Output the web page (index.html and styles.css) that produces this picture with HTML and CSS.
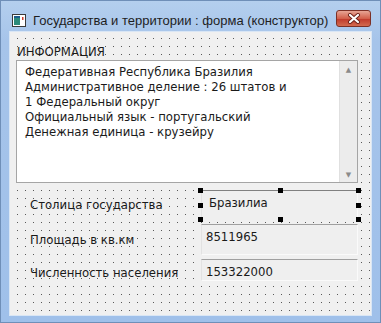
FILE: index.html
```html
<!DOCTYPE html>
<html lang="ru">
  <head>
    <meta charset="UTF-8" />
    <title>Государства и территории : форма (конструктор)</title>
    <link rel="stylesheet" href="styles.css">
  </head>
  <body>
    <div class="window">
      <div class="titlebar">
        <svg class="app_icon" width="14" height="13" viewBox="0 0 14 13">
          <rect x="0.5" y="0.5" width="13" height="12" fill="#fff" stroke="#3a3a3a" />
          <rect x="2" y="2" width="6" height="9" fill="#2c8a7a" />
          <rect x="2" y="2" width="6" height="2" fill="#1b5e8c" />
          <rect x="10" y="3" width="1.5" height="3" fill="#d04030" />
        </svg>
        <div class="title">Государства и территории : форма (конструктор)</div>
        <div class="close_btn">
          <svg width="14" height="11" viewBox="0 0 14 11">
            <path d="M3 2 L11 9 M11 2 L3 9" stroke="#6b2018" stroke-width="4" stroke-linecap="round" />
            <path d="M3 2 L11 9 M11 2 L3 9" stroke="#fff" stroke-width="2.2" stroke-linecap="round" />
          </svg>
        </div>
      </div>
      <div class="client">
        <div class="section_label">ИНФОРМАЦИЯ</div>
        <div class="memo">
          <div class="memo_text">
            Федеративная Республика Бразилия<br>
            Административное деление : 26 штатов и<br>
            1 Федеральный округ<br>
            Официальный язык - португальский<br>
            Денежная единица - крузейру
          </div>
          <div class="scrollbar">
            <span class="arrow">&#9650;</span>
            <span class="arrow">&#9660;</span>
          </div>
        </div>
        <div class="fields">
          <div class="field_row row1">
            <div class="field_label">Столица государства</div>
            <div class="field_box selected">
              Бразилиа
              <span class="handle h_tl"></span>
              <span class="handle h_tm"></span>
              <span class="handle h_tr"></span>
              <span class="handle h_ml"></span>
              <span class="handle h_mr"></span>
              <span class="handle h_bl"></span>
              <span class="handle h_bm"></span>
              <span class="handle h_br"></span>
            </div>
          </div>
          <div class="field_row row2">
            <div class="field_label">Площадь в кв.км</div>
            <div class="field_box">8511965</div>
          </div>
          <div class="field_row row3">
            <div class="field_label">Численность населения</div>
            <div class="field_box">153322000</div>
          </div>
        </div>
      </div>
    </div>
  </body>
</html>
```

FILE: styles.css
```css
body {
  margin: 0;
  background-color: #a9c7ec;
}
.window {
  width: 381px;
  height: 323px;
  box-sizing: border-box;
  display: flex;
  flex-direction: column;
  background: linear-gradient(#b4cfee, #a6c4ea 40px, #9fc0ea);
  border: 1px solid #6f8fb8;
  padding: 0 8px 6px 8px;
}
.titlebar {
  height: 30px;
  box-sizing: border-box;
  display: flex;
  align-items: flex-start;
  padding: 12px 0 0 3px;
}
.app_icon {
  flex-shrink: 0;
  margin-top: 1px;
}
.title {
  font-family: "Liberation Sans", Arial, sans-serif;
  font-size: 13px;
  line-height: 17px;
  color: #1e1e1e;
  margin-left: 7px;
  margin-top: -1px;
  flex: 1;
  min-width: 0;
  white-space: nowrap;
}
.close_btn {
  flex-shrink: 0;
  width: 33px;
  height: 15px;
  margin-right: 1px;
  margin-top: -3px;
  border: 1px solid #7c3026;
  border-radius: 3px;
  background: linear-gradient(#e7a595, #d2604b 50%, #c0392b 52%, #d36b50);
  display: flex;
  align-items: center;
  justify-content: center;
}
/* сетка конструктора: точка через 8px */
.client {
  flex: 1;
  position: relative;
  border: 1px solid #d9e6f5;
  background-color: #f0f0f0;
  background-image: url("data:image/svg+xml,%3Csvg xmlns='http://www.w3.org/2000/svg' width='8' height='8'%3E%3Crect width='1' height='1' fill='%23585858'/%3E%3C/svg%3E");
  background-size: 8px 8px;
  background-position: 7px 6px;
  font-family: "DejaVu Sans", sans-serif;
  font-size: 11.7px;
  color: #1a1a1a;
}
.section_label {
  margin: 13px 0 0 7px;
  height: 15px;
  line-height: 15px;
}
.memo {
  margin: 0 13px 0 6px;
  height: 121px;
  border: 1px solid #a5a5a5;
  background-color: #fff;
  display: flex;
}
.memo_text {
  flex: 1;
  padding: 4px 0 0 8px;
  line-height: 15px;
}
.scrollbar {
  width: 17px;
  background-color: #ececec;
  border-left: 1px solid #e0e0e0;
  display: flex;
  flex-direction: column;
  justify-content: space-between;
  align-items: center;
  padding: 5px 0 3px;
}
.arrow {
  font-size: 7px;
  color: #8a8a8a;
}
.fields {
  margin-top: 7px;
  display: flex;
  flex-direction: column;
  gap: 4px;
}
.field_row {
  display: flex;
  align-items: center;
}
.row1 {
  height: 30px;
}
.row2 {
  height: 31px;
}
.row3 {
  height: 22px;
}
.field_label {
  width: 171px;
  padding-left: 20px;
  white-space: nowrap;
}
.row3 .field_label {
  margin-top: 6px;
}
.field_box {
  position: relative;
  box-sizing: border-box;
  width: 157px;
  height: 100%;
  background-color: #efefef;
  border-top: 1px solid #a0a0a0;
  border-right: 1px solid #fafafa;
  border-bottom: 1px solid #fafafa;
  border-left: 1px solid #e2e2e2;
  padding: 5px 0 0 4px;
}
.selected {
  padding-left: 7px;
  border-top-color: #808080;
  border-bottom: none;
}
.handle {
  position: absolute;
  width: 5px;
  height: 5px;
  background-color: #000;
}
.h_tl { left: -4px; top: -3px; }
.h_tm { left: 76px; top: -3px; }
.h_tr { right: -4px; top: -3px; }
.h_ml { left: -4px; top: 12px; }
.h_mr { right: -4px; top: 12px; }
.h_bl { left: -4px; bottom: -2px; }
.h_bm { left: 76px; bottom: -2px; }
.h_br { right: -4px; bottom: -2px; }
```
